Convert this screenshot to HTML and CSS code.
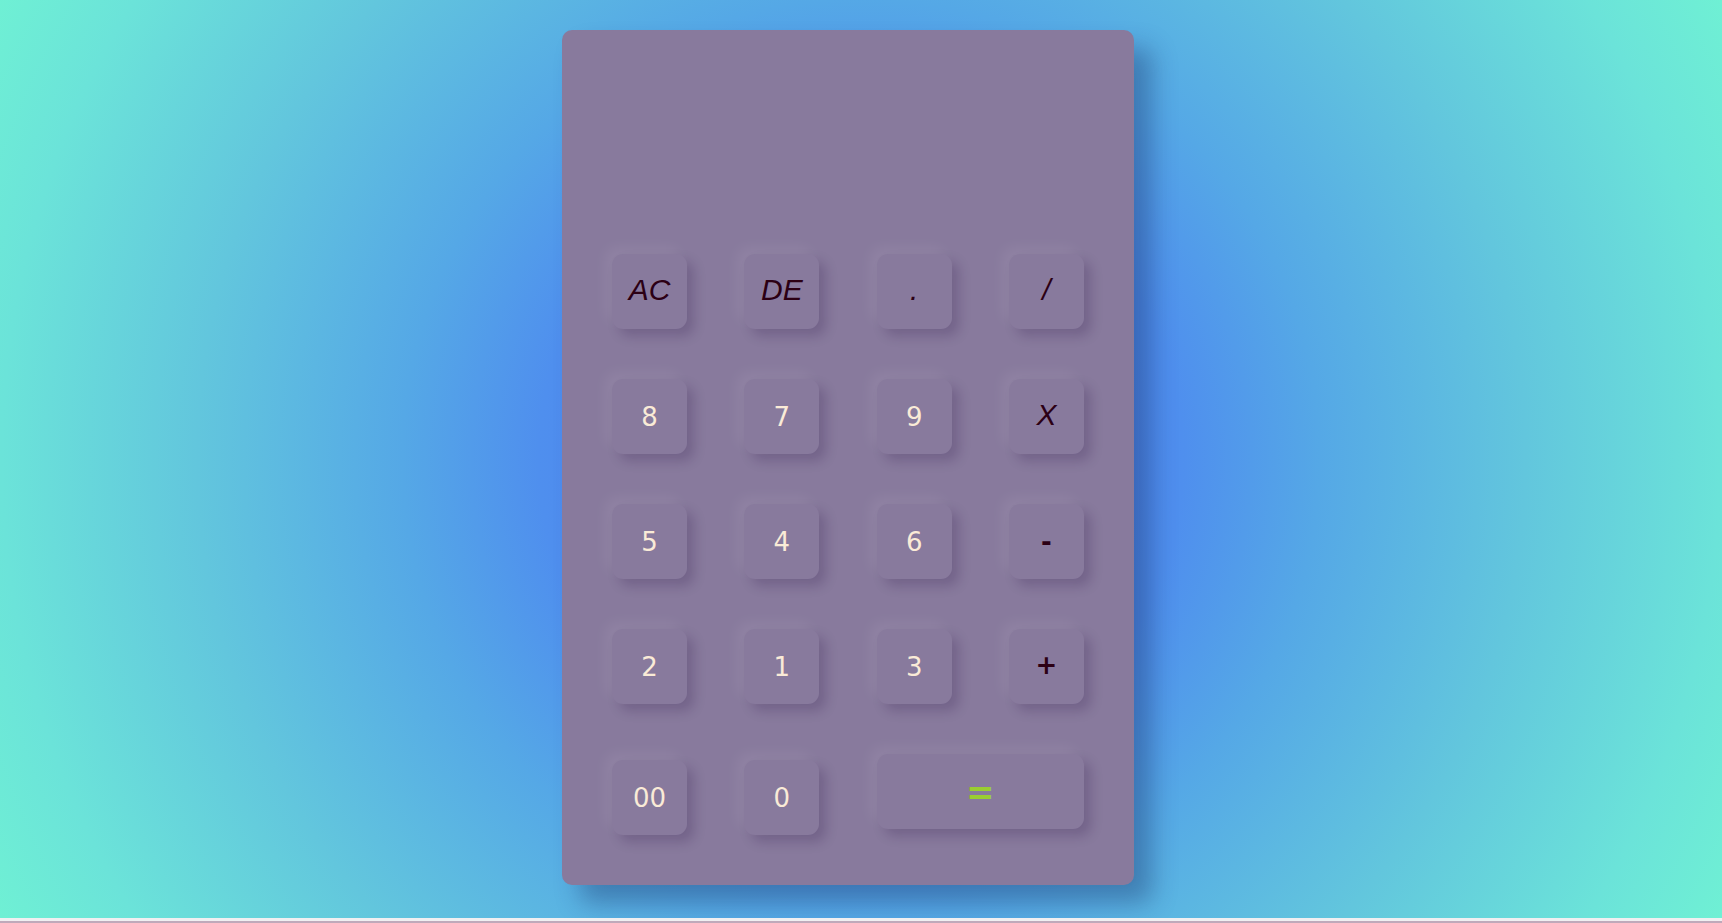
FILE: index.html
```html
<!DOCTYPE html>
<html lang="en">
<head>
<meta charset="utf-8">
<title>Calculator</title>
<link rel="stylesheet" href="styles.css">
</head>
<body>
<div class="page">
  <div class="calculator">
    <div class="display"></div>
    <div class="keys">
      <button class="key op">AC</button>
      <button class="key op">DE</button>
      <button class="key op">.</button>
      <button class="key op">/</button>
      <button class="key num">8</button>
      <button class="key num">7</button>
      <button class="key num">9</button>
      <button class="key op">X</button>
      <button class="key num">5</button>
      <button class="key num">4</button>
      <button class="key num">6</button>
      <button class="key sign">-</button>
      <button class="key num">2</button>
      <button class="key num">1</button>
      <button class="key num">3</button>
      <button class="key sign plus">+</button>
      <button class="key num low">00</button>
      <button class="key num low">0</button>
      <button class="key equal">=</button>
    </div>
  </div>
</div>
<div class="footer-strip"></div>
</body>
</html>
```
FILE: styles.css
```css
* { box-sizing: border-box; }
html, body { margin: 0; padding: 0; }
body { background: #f2f1f3; overflow: hidden; }

.page {
  height: 918px;
  padding-top: 30px;
  background: radial-gradient(circle farthest-corner at 861px 458px,
    #4a78f0 0%,
    #4e88ef 25%,
    #4f8fee 33%,
    #55a8e6 47%,
    #62c6dd 68%,
    #6be3d9 88%,
    #6ff0d4 100%);
}

.calculator {
  width: 572px;
  height: 855px;
  margin-left: 562px;
  padding: 50px;
  background: #887a9d;
  border-radius: 10px;
  box-shadow: 18px 18px 24px rgba(20, 40, 90, 0.35);
}

.display { height: 174px; }

.keys {
  display: grid;
  grid-template-columns: repeat(4, 75px);
  grid-auto-rows: 75px;
  column-gap: 57.33px;
  row-gap: 50px;
}

.key {
  border: none;
  outline: none;
  padding: 0;
  margin: 0;
  width: 75px;
  height: 75px;
  border-radius: 11px;
  background: #887a9d;
  box-shadow: -7px -7px 14px rgba(255, 255, 255, 0.07),
              7px 7px 12px rgba(40, 20, 70, 0.22);
  display: flex;
  align-items: center;
  justify-content: center;
  line-height: 1;
}

.num {
  font-family: "DejaVu Sans", Verdana, sans-serif;
  font-size: 26px;
  color: #faebd7;
}

.op {
  font-family: "Liberation Sans", Arial, sans-serif;
  font-style: italic;
  font-size: 30px;
  color: #2c0014;
  padding-bottom: 4px;
}

.sign {
  font-family: "DejaVu Sans", Verdana, sans-serif;
  font-weight: bold;
  font-size: 26px;
  color: #2c0014;
}

.plus { padding-bottom: 4px; }

.low { margin-top: 6px; }

.equal {
  grid-column: span 2;
  width: 207px;
  font-family: "DejaVu Sans", Verdana, sans-serif;
  font-weight: bold;
  font-size: 34px;
  color: #9acd32;
  padding-top: 1px;
}

.footer-strip {
  height: 5px;
  background: #f0eff1;
  border-bottom: 2px solid #bfa9ba;
}
```
